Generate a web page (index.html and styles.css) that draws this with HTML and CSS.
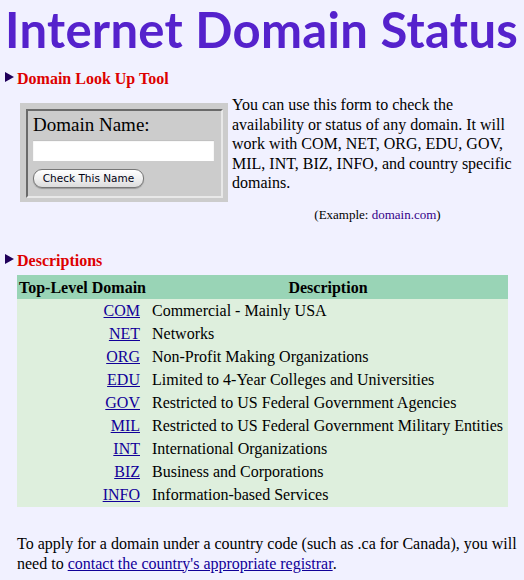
FILE: index.html
```html
<!DOCTYPE html>
<html>
<head>
<meta charset="utf-8">
<link rel="stylesheet" href="styles.css">
</head>
<body>
<h1 class="title">Internet Domain Status</h1>

<h2 class="sect"><svg class="tri" width="9" height="10" viewBox="0 0 9 10"><polygon points="0,0 9,5 0,10" fill="#20005a"/></svg><span>Domain Look Up Tool</span></h2>

<div class="lookup">
  <div class="formbox">
    <div class="fieldset">
      <div class="label">Domain Name:</div>
      <div class="input"></div>
      <div class="btn">Check This Name</div>
    </div>
  </div>
  <div class="info">
    <p>You can use this form to check the availability or status of any domain. It will work with COM, NET, ORG, EDU, GOV, MIL, INT, BIZ, INFO, and country specific domains.</p>
    <p class="example">(Example: <a class="plain">domain.com</a>)</p>
  </div>
</div>

<h2 class="sect sect2"><svg class="tri" width="9" height="10" viewBox="0 0 9 10"><polygon points="0,0 9,5 0,10" fill="#20005a"/></svg><span>Descriptions</span></h2>

<table class="tld">
  <thead>
    <tr><th class="c1">Top-Level Domain</th><th class="c2">Description</th></tr>
  </thead>
  <tbody>
    <tr><td class="c1"><a>COM</a></td><td>Commercial - Mainly USA</td></tr>
    <tr><td class="c1"><a>NET</a></td><td>Networks</td></tr>
    <tr><td class="c1"><a>ORG</a></td><td>Non-Profit Making Organizations</td></tr>
    <tr><td class="c1"><a>EDU</a></td><td>Limited to 4-Year Colleges and Universities</td></tr>
    <tr><td class="c1"><a>GOV</a></td><td>Restricted to US Federal Government Agencies</td></tr>
    <tr><td class="c1"><a>MIL</a></td><td>Restricted to US Federal Government Military Entities</td></tr>
    <tr><td class="c1"><a>INT</a></td><td>International Organizations</td></tr>
    <tr><td class="c1"><a>BIZ</a></td><td>Business and Corporations</td></tr>
    <tr><td class="c1"><a>INFO</a></td><td>Information-based Services</td></tr>
  </tbody>
</table>

<p class="foot">To apply for a domain under a country code (such as .ca for Canada), you will need to <a>contact the country's appropriate registrar</a>.</p>
</body>
</html>
```

FILE: styles.css
```css
html, body {
  margin: 0;
  padding: 0;
  background: #f1f1ff;
}
body {
  font-family: "Liberation Serif", "Times New Roman", serif;
  font-size: 16px;
  color: #000;
  padding: 0 5px;
}
a {
  color: #110099;
  text-decoration: underline;
}
a.plain {
  text-decoration: none;
  color: #330088;
}
.title {
  margin: 0;
  padding-top: 0;
  height: 69px;
  font-family: Lato, sans-serif;
  font-weight: bold;
  font-size: 49px;
  line-height: 58px;
  color: #5522cc;
  white-space: nowrap;
  letter-spacing: 0.3px;
}
.sect {
  margin: 0;
  display: flex;
  align-items: center;
  gap: 3px;
  font-size: 16px;
  font-weight: bold;
  color: #dd0000;
  height: 20px;
  line-height: 20px;
}
.tri {
  display: block;
  margin-top: -4px;
}
.lookup {
  display: flex;
  align-items: flex-start;
  margin-top: 7px;
}
.formbox {
  margin-left: 15px;
  margin-top: 7px;
  width: 197px;
  background: #cccccc;
  padding: 6px 5px 4px 6px;
  flex: none;
}
.fieldset {
  border-color: #6a6a6a #e8e8e8 #e8e8e8 #6a6a6a;
  border-style: solid;
  border-width: 2px;
  padding: 3px 7px 8px 5px;
}
.label {
  font-size: 19px;
  line-height: 22px;
}
.input {
  margin-top: 4px;
  height: 21px;
  background: #fff;
  width: 181px;
  box-shadow: inset 0 1px 1px #bbb;
}
.btn {
  margin-top: 8px;
  width: 109px;
  height: 17px;
  border: 1px solid #777;
  border-radius: 9px;
  background: linear-gradient(#ffffff, #f0f0f0 50%, #dcdcdc);
  font-family: "DejaVu Sans", sans-serif;
  font-size: 10.5px;
  line-height: 17px;
  text-align: center;
  color: #001;
  box-shadow: 0 1px 1px #999;
}
.info {
  margin-left: 4px;
  margin-top: -1px;
  flex: 1;
}
.info p {
  margin: 0;
  line-height: 19.5px;
}
.info .example {
  margin-top: 14px;
  text-align: center;
  font-size: 13px;
  line-height: 16px;
  padding-left: 4px;
}
.sect2 {
  margin-top: 28px;
}
.tld {
  margin: 4px 0 0 12px;
  border-collapse: collapse;
  width: 491px;
}
.tld th, .tld td {
  padding: 2px 4px 2px 2px;
  line-height: 19px;
  font-size: 16px;
  white-space: nowrap;
}
.tld th {
  padding-top: 3px;
}
.tld thead tr {
  background: #99d4b6;
}
.tld tbody tr {
  background: #deefdd;
}
.tld th.c1 {
  text-align: left;
  width: 120px;
}
.tld th.c2 {
  text-align: center;
}
.tld td.c1 {
  text-align: right;
  padding-right: 10px;
}
.tld tbody tr:last-child td {
  padding-bottom: 3px;
}
.foot {
  margin: 27px 0 0 12px;
  line-height: 20px;
}
```
